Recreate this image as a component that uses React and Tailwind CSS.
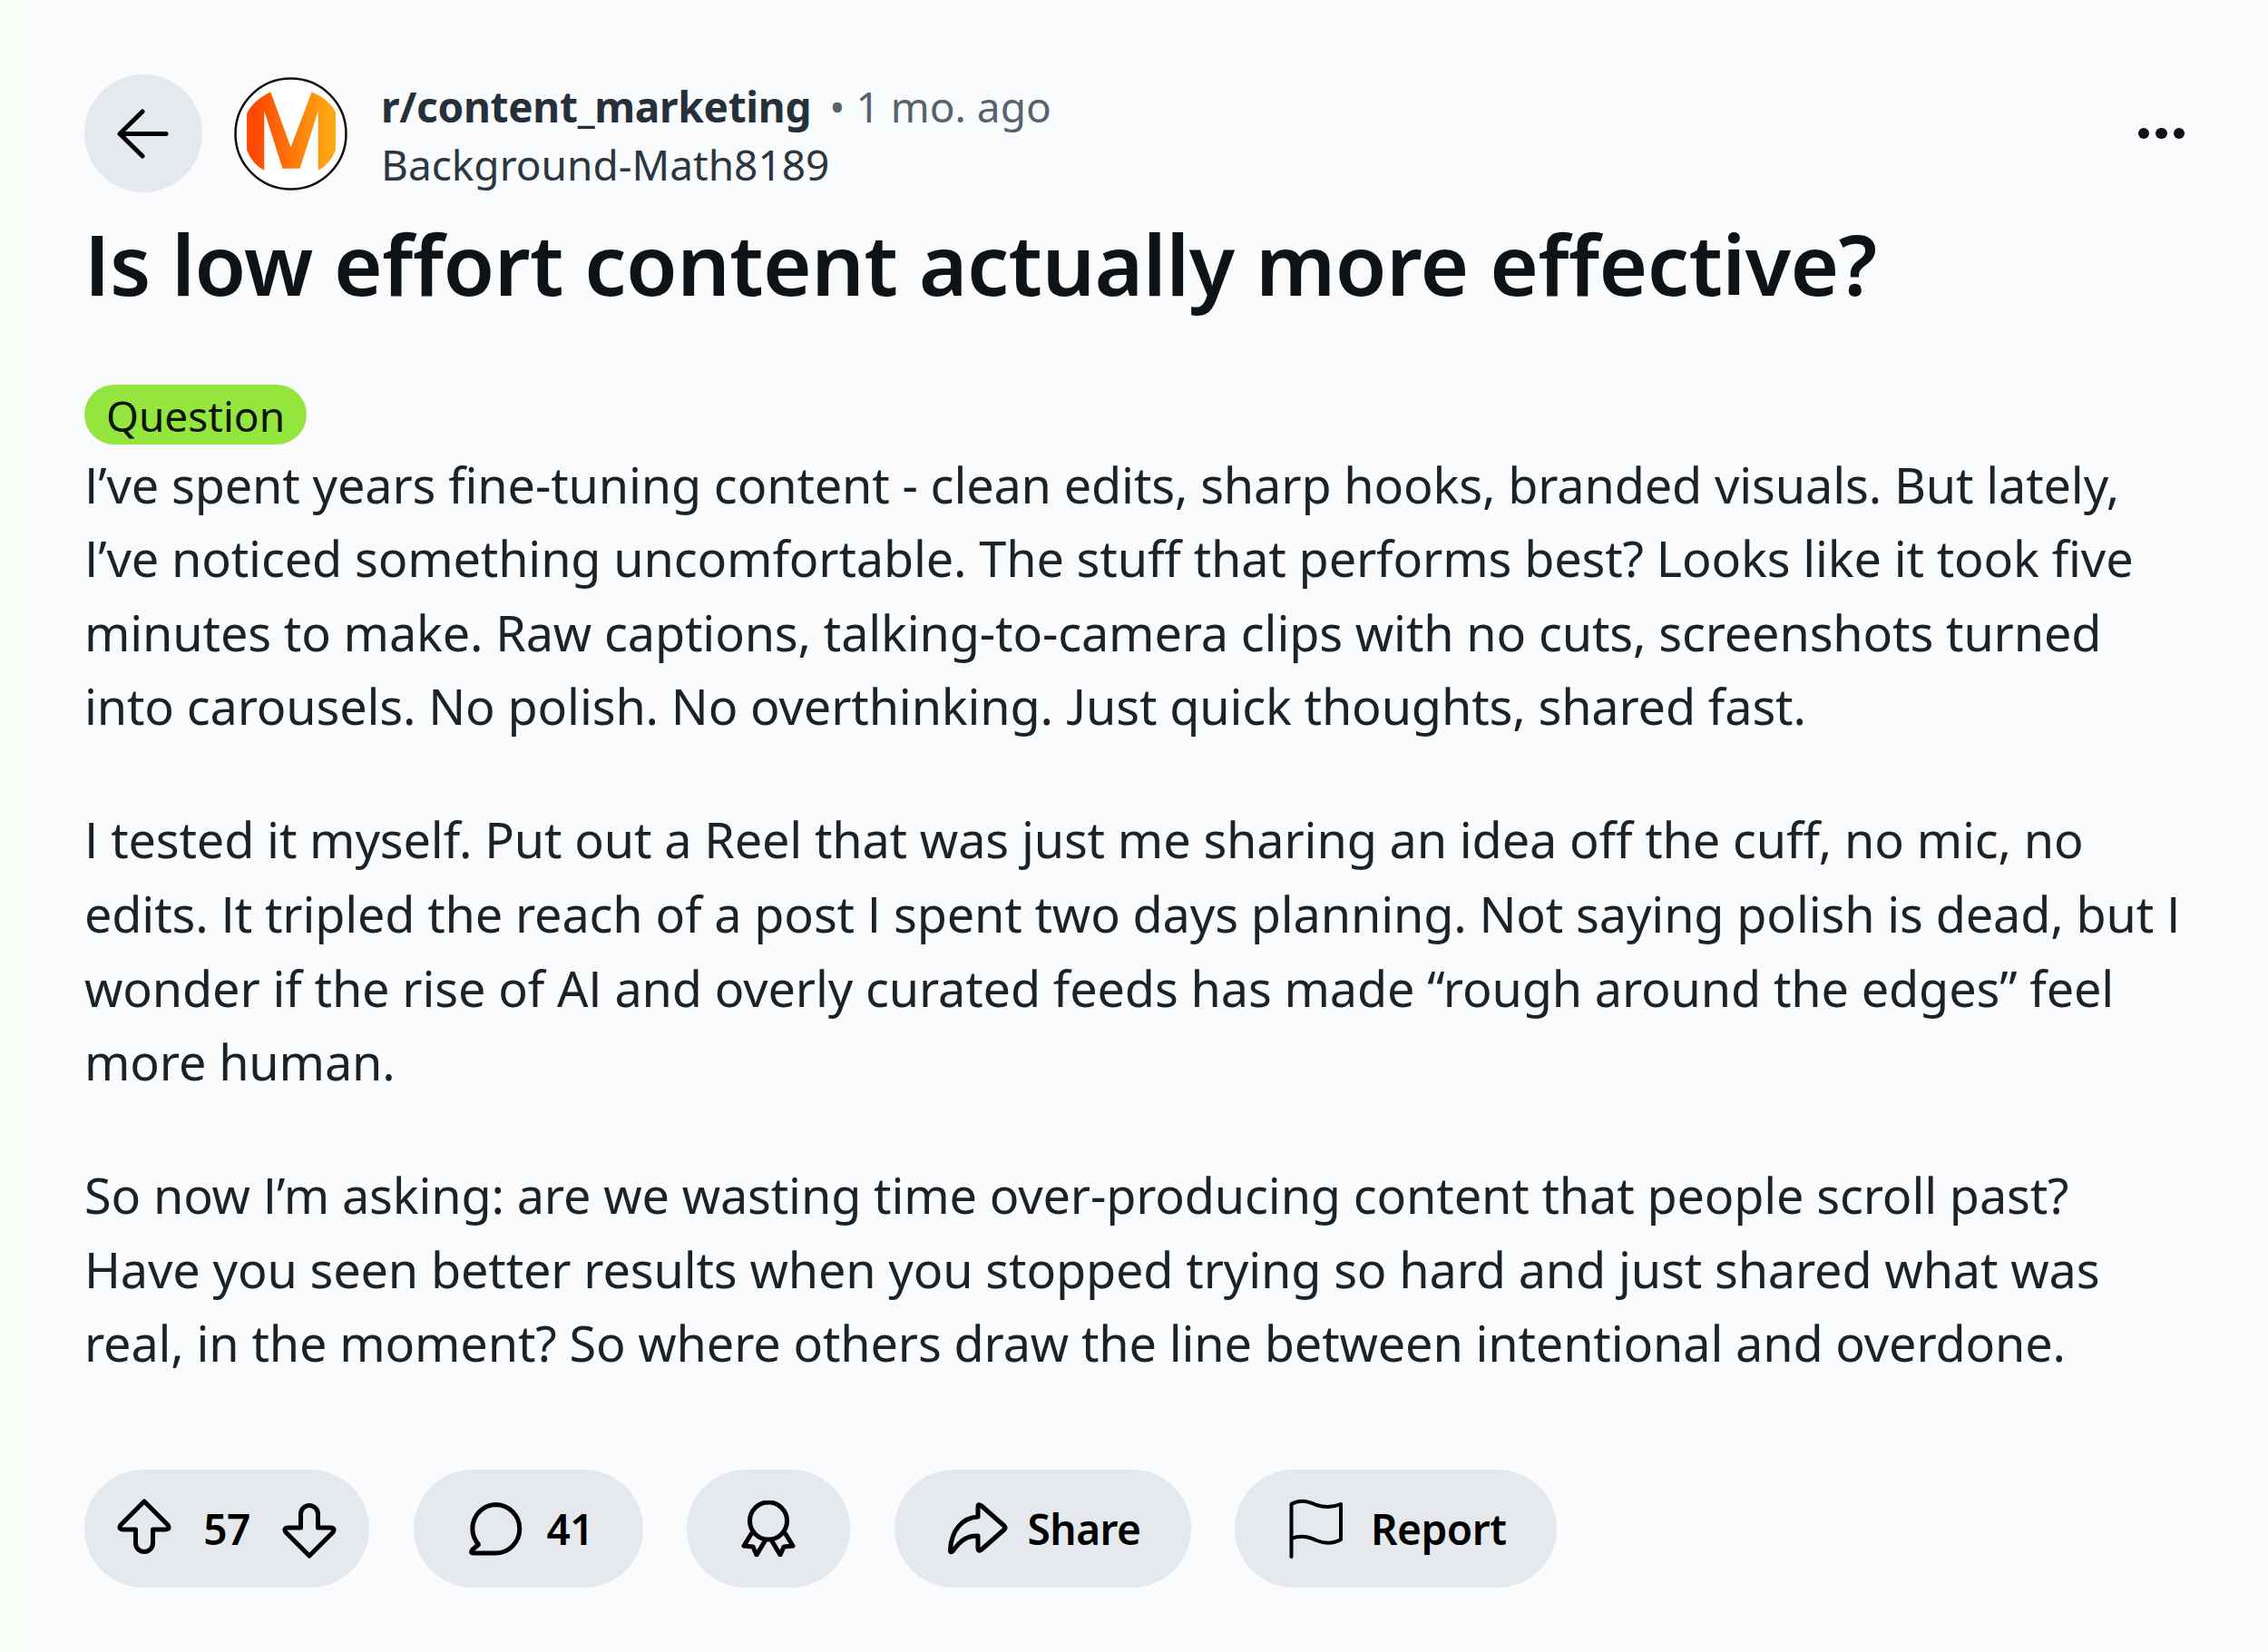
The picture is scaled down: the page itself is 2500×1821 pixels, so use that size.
// App.jsx
// Post detail card

const paragraphs = [
  [
    "I’ve spent years fine-tuning content - clean edits, sharp hooks, branded visuals. But lately,",
    "I’ve noticed something uncomfortable. The stuff that performs best? Looks like it took five",
    "minutes to make. Raw captions, talking-to-camera clips with no cuts, screenshots turned",
    "into carousels. No polish. No overthinking. Just quick thoughts, shared fast.",
  ],
  [
    "I tested it myself. Put out a Reel that was just me sharing an idea off the cuff, no mic, no",
    "edits. It tripled the reach of a post I spent two days planning. Not saying polish is dead, but I",
    "wonder if the rise of AI and overly curated feeds has made “rough around the edges” feel",
    "more human.",
  ],
  [
    "So now I’m asking: are we wasting time over-producing content that people scroll past?",
    "Have you seen better results when you stopped trying so hard and just shared what was",
    "real, in the moment? So where others draw the line between intentional and overdone.",
  ],
];

const Logo = () => (
  <svg viewBox="0 0 124 124" className="w-[125px] h-[125px] shrink-0">
    <defs>
      <linearGradient id="m" x1="0" x2="1" y1="0" y2="0">
        <stop offset="0.1" stopColor="#fc4a02" />
        <stop offset="0.9" stopColor="#ffa412" />
      </linearGradient>
    </defs>
    <circle cx="62" cy="62" r="60.5" fill="#fff" stroke="#111" strokeWidth="2.5" />
    <path
      d="M14 40 Q20 26 40 16 L62 77 L85 16 Q104 24 111 38 V80 Q105 95 92 102 V37 L72 100 H53 L33 37 V102 Q20 95 14 80 Z"
      fill="url(#m)"
    />
  </svg>
);

const Icon = ({ w, h, sw = 5, className = "", children }) => (
  <svg
    viewBox={`0 0 ${w} ${h}`}
    width={w}
    height={h}
    fill="none"
    stroke="currentColor"
    strokeWidth={sw}
    strokeLinecap="round"
    strokeLinejoin="round"
    className={`shrink-0 ${className}`}
  >
    {children}
  </svg>
);

const Pill = ({ className = "", children }) => (
  <div className={`h-[130px] rounded-full bg-[#e5e8ec] flex items-center text-[46px] font-semibold tracking-[-0.5px] text-black ${className}`}>
    {children}
  </div>
);

const ARROW = "M30 4 L56 30 Q59 35 53 35 H39.5 V50 A9.5 9.5 0 0 1 20.5 50 V35 H7 Q1 35 4 30 Z";

export default function App() {
  return (
    <div
      className="w-[2500px] h-[1821px] bg-[#fafbfd] border-l-[27px] border-[#f6fdf5] pl-[66px] pr-[90px] pt-[81px] overflow-hidden text-[#1a1e22] [font-feature-settings:'ss01','ss02','ss03','ss04']"
      style={{ fontFamily: '"Noto Sans", "Open Sans", sans-serif' }}
    >
      <header className="flex items-center">
        <div className="w-[130px] h-[130px] rounded-full bg-[#e5e8ec] flex items-center justify-center mr-[35px] text-black">
          <Icon w={60} h={55}>
            <path d="M4 27.5 H55 M29 3 L4 27.5 L29 52" />
          </Icon>
        </div>
        <Logo />
        <div className="ml-[37px] flex-1 pt-[4px]">
          <div className="flex items-baseline text-[46px] leading-[64px]">
            <span className="font-bold text-[#25303a] tracking-[-0.3px]">r/content_marketing</span>
            <span className="ml-[20px] text-[#56626d]">• 1 mo. ago</span>
          </div>
          <div className="text-[46px] leading-[64px] text-[#2c3640]">Background-Math8189</div>
        </div>
        <div className="flex gap-[7px] mr-[2px]">
          <div className="w-[12.5px] h-[12.5px] rounded-full bg-[#111418]" />
          <div className="w-[12.5px] h-[12.5px] rounded-full bg-[#111418]" />
          <div className="w-[12.5px] h-[12.5px] rounded-full bg-[#111418]" />
        </div>
      </header>

      <h1 className="mt-[18px] text-[92px] leading-[120px] font-semibold tracking-[-0.55px] text-[#101316] whitespace-nowrap">
        Is low effort content actually more effective?
      </h1>

      <div className="mt-[73px] w-fit h-[66px] pt-[2px] px-[24px] rounded-full bg-[#95e53f] flex items-center text-[46px] text-[#0b1408]">
        Question
      </div>

      <div className="mt-[3.5px] text-[54px] leading-[81.6px] tracking-[-0.15px] text-[#1d2226] whitespace-nowrap">
        {paragraphs.map((lines, i) => (
          <p key={i} className={i > 0 ? "mt-[65.5px]" : ""}>
            {lines.map((line) => (
              <span key={line} className="block">{line}</span>
            ))}
          </p>
        ))}
      </div>

      <footer className="mt-[98px] flex items-center gap-[48.5px]">
        <Pill className="w-[314px] px-[36px] justify-between">
          <Icon w={60} h={65} className="mb-[3px]">
            <path d={ARROW} />
          </Icon>
          <span>57</span>
          <Icon w={60} h={65} className="rotate-180 mt-[3px]">
            <path d={ARROW} />
          </Icon>
        </Pill>
        <Pill className="w-[253px] pl-[60px] gap-[27px]">
          <Icon w={60} h={60}>
            <path d="M30 3.5 A26.5 26.5 0 1 1 30 57 H6 Q1.5 57 5 53 L11.5 47.5 A26.5 26.5 0 0 1 30 3.5 Z" />
          </Icon>
          <span>41</span>
        </Pill>
        <Pill className="w-[180px] justify-center">
          <Icon w={60} h={62}>
            <circle cx="30" cy="22.5" r="20.5" />
            <path d="M11 37 L3 50 L13 51 L17 60 L26.5 44" />
            <path d="M49 37 L57 50 L47 51 L43 60 L33.5 44" />
          </Icon>
        </Pill>
        <Pill className="w-[327px] pl-[59px] gap-[22px]">
          <Icon w={66} h={58}>
            <path d="M33 5 Q33 1 37 4 L62 26 Q64 28 62 30 L37 52 Q33 55 33 50 V37 Q17 36 6 53 Q2 57 2.5 52 C4 30 16 17 33 16 Z" />
          </Icon>
          <span>Share</span>
        </Pill>
        <Pill className="w-[355px] pl-[58px] gap-[30px]">
          <Icon w={62} h={66} sw={4}>
            <path d="M4.5 64 V6 C14 0 24 3 32 7 C42 10 52 9 59 6 V45 C52 49 42 50 32 46 C24 42 14 40 4.5 44" />
          </Icon>
          <span>Report</span>
        </Pill>
      </footer>
    </div>
  );
}
